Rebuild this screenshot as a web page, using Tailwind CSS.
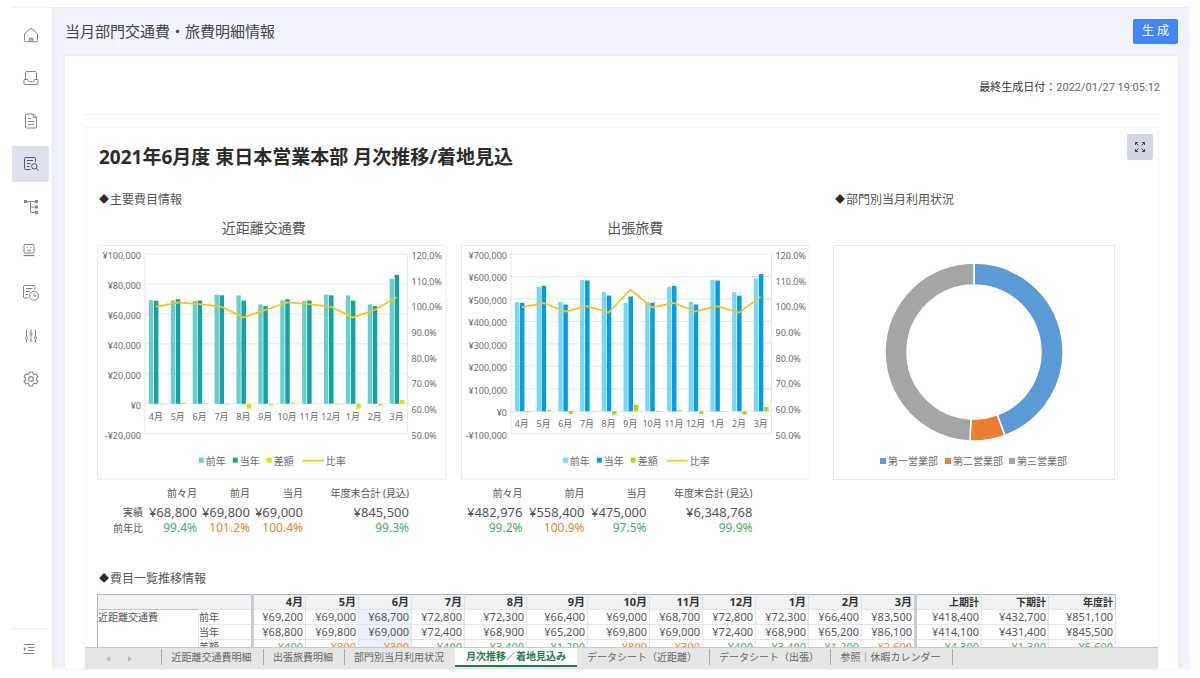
<!DOCTYPE html>
<html lang="ja">
<head>
<meta charset="utf-8">
<meta name="viewport" content="width=device-width, initial-scale=1">
<title>当月部門交通費・旅費明細情報</title>
<script src="https://cdn.jsdelivr.net/npm/@tailwindcss/browser@4"></script>
</head>
<body class="flex h-screen overflow-hidden bg-white pt-[7px] pr-[10px] pb-[9px] pl-3 font-['Noto_Sans','Noto_Sans_CJK_JP',sans-serif] text-[#555]">

<aside class="flex w-10 shrink-0 flex-col justify-between border-t border-[#efeff5] pt-[9px] pr-[3px]">
  <nav aria-label="メイン" class="flex flex-col gap-[7px] text-[#858585]">
    <a href="#home" aria-label="ホーム" class="flex h-9 items-center justify-center rounded-xs">
      <svg class="size-4" viewBox="0 0 16 16" fill="none" stroke="currentColor"><path d="M1.500 6.700 8 1.200l6.500 5.500v7a1 1 0 0 1-1 1h-11a1 1 0 0 1-1-1z"/><path d="M6.300 14.500v-3.200h3.400v3.200"/><path d="M8 11.500v3"/></svg>
    </a>
    <a href="#inbox" aria-label="受信箱" class="flex h-9 items-center justify-center rounded-xs">
      <svg class="size-4" viewBox="0 0 16 16" fill="none" stroke="currentColor"><path d="M2.500 9V2.500a1 1 0 0 1 1-1h9a1 1 0 0 1 1 1V9"/><path d="M1 9.500h3.600l1.600 2.300h3.600l1.600-2.300H15v4a1 1 0 0 1-1 1H2a1 1 0 0 1-1-1z"/></svg>
    </a>
    <a href="#document" aria-label="文書" class="flex h-9 items-center justify-center rounded-xs">
      <svg class="size-4" viewBox="0 0 16 16" fill="none" stroke="currentColor"><path d="M2.500 2a1 1 0 0 1 1-1h7l3 3.200V14a1 1 0 0 1-1 1h-9a1 1 0 0 1-1-1z"/><path d="M10.300 1v3.400h3.200M5 5.500h3M5 8.500h6M5 11.500h6"/></svg>
    </a>
    <a href="#report" aria-label="レポート" aria-current="page" class="flex h-9 items-center justify-center rounded-xs bg-[#dfe0ed] text-[#555761]">
      <svg class="size-4" viewBox="0 0 16 16" fill="none" stroke="currentColor"><path d="M12.500 6V2.500a1 1 0 0 0-1-1h-9a1 1 0 0 0-1 1v10a1 1 0 0 0 1 1h5"/><path d="M4 4.500h6M4 7.500h3.500M4 10.500h2.500"/><circle cx="11.300" cy="10.300" r="2.700"/><path d="m13.300 12.300 2.200 2.400"/></svg>
    </a>
    <a href="#tree" aria-label="組織" class="flex h-9 items-center justify-center rounded-xs">
      <svg class="size-4" viewBox="0 0 16 16" fill="none" stroke="currentColor"><path d="M2.500 2.500h11M7.500 2.500v11h6M7.500 8h6"/><g fill="currentColor" stroke="none"><rect x="1" y="1" width="3" height="3"/><rect x="12" y="1" width="3" height="3"/><rect x="12" y="6.500" width="3" height="3"/><rect x="12" y="12" width="3" height="3"/></g></svg>
    </a>
    <a href="#robot" aria-label="ボット" class="flex h-9 items-center justify-center rounded-xs pr-[3px]">
      <svg class="size-[14px]" viewBox="0 0 14 14" fill="none" stroke="currentColor"><rect x="2" y="1.500" width="10" height="8.500" rx=".5"/><path d="M4.500 4.500h1.200M8.300 4.500h1.200M5 7l1 .8h2L9 7"/><path d="M1.500 12.500h11" stroke-width="1.300"/></svg>
    </a>
    <a href="#schedule" aria-label="履歴" class="flex h-9 items-center justify-center rounded-xs">
      <svg class="size-4" viewBox="0 0 16 16" fill="none" stroke="currentColor"><path d="M12 5V1.500a1 1 0 0 0-1-1H1.500a1 1 0 0 0-1 1v10.500a1 1 0 0 0 1 1h4"/><path d="M3 3.500h6.500M3 6.500h4M3 9.500h2"/><circle cx="11" cy="10.800" r="4.500"/><path d="M11 8.300v2.700h2.300"/></svg>
    </a>
    <a href="#adjust" aria-label="調整" class="flex h-9 items-center justify-center rounded-xs">
      <svg class="size-4" viewBox="0 0 16 16" fill="none" stroke="currentColor"><path d="M3.500 1.500v7M3.500 11.500v3M8 1.500v3M8 7.500v7M12.500 1.500v7M12.500 11.500v3"/><circle cx="3.500" cy="9.800" r="1.200"/><circle cx="8" cy="6" r="1.200"/><circle cx="12.500" cy="9.800" r="1.200"/></svg>
    </a>
    <a href="#settings" aria-label="設定" class="flex h-9 items-center justify-center rounded-xs">
      <svg class="size-4" viewBox="0 0 24 24" fill="none" stroke="currentColor" stroke-width="1.600" stroke-linejoin="round"><path d="M9.600 2h4.800l.7 3.100 1.900 1.100 3-1 2.400 4.200-2.300 2.100v2.200l2.300 2.100-2.400 4.200-3-1-1.900 1.100-.7 3.100H9.600l-.7-3.100L7 19l-3 1-2.400-4.200 2.300-2.100v-2.200L1.600 9.400 4 5.200l3 1 1.900-1.100z" transform="translate(0 -.6)"/><circle cx="12" cy="12" r="3.600"/></svg>
    </a>
  </nav>
  <div class="border-t border-[#ececec] pt-3 pb-3">
    <button type="button" aria-label="メニューを開く" class="flex h-4 w-full items-center justify-center pr-[3px] text-[#858585]">
      <svg class="size-3" viewBox="0 0 12 12" fill="none" stroke="currentColor"><path d="M.5 1.500h11M5 4.500h6.500M5 7.500h6.500M.5 10.500h11"/><path d="M.8 3.800v4.400L3.300 6z" fill="currentColor" stroke="none"/></svg>
    </button>
  </div>
</aside>

<main class="flex min-w-0 flex-1 flex-col border-t border-[#e9eaf4] bg-[#f1f2fb] pr-3 pl-[13px] shadow-[inset_4px_0_3px_-2px_#e6e7f3]">
  <header class="flex h-12 shrink-0 items-center justify-between pb-[2px]">
    <h1 class="text-[15px] text-[#444]">当月部門交通費・旅費明細情報</h1>
    <button type="button" class="h-[25px] w-[45px] rounded-xs bg-[#4086f7] text-xs text-white">生 成</button>
  </header>

  <section class="flex min-h-0 flex-1 flex-col bg-white pr-[18px] pl-[19px] shadow-[0_0_3px_#e2e3ee]">
    <p class="flex h-[59px] shrink-0 items-center justify-end border-b border-[#f2f2f2] pt-[6px] font-[Roboto,'Noto_Sans_CJK_JP',sans-serif] text-[11px] text-[#666]"><span class="text-[#333]">最終生成日付：</span><time datetime="2022-01-27T19:05:12">2022/01/27 19:05:12</time></p>

    <div class="mt-3 mr-px flex min-h-0 flex-1 flex-col border border-b-0 border-[#f4f4f4]">
      <div class="min-h-0 flex-1 overflow-hidden">
        <div class="flex h-[59px] justify-between pt-[6px] pr-[5px] pl-[14px]">
          <h2 class="flex h-[46px] items-center text-[19px] font-bold text-[#2b2b2b]">2021年6月度 東日本営業本部 月次推移/着地見込</h2>
          <button type="button" aria-label="全画面表示" class="flex size-[26px] items-center justify-center rounded-xs bg-[#d3d5e3] text-[#444]">
            <svg class="size-3" viewBox="0 0 12 12" fill="none" stroke="currentColor"><path d="M1.500 4V1.500H4M8 1.500h2.500V4M10.500 8v2.500H8M4 10.500H1.500V8M1.500 1.500 4.500 4.500M10.500 1.500l-3 3M10.500 10.500l-3-3M1.500 10.500l3-3"/></svg>
          </button>
        </div>

        <div class="flex gap-[23px] pr-[43px] pl-3">
          <section class="flex-[713]">
            <h3 class="flex h-[26px] items-center pl-[2px] text-xs"><span class="w-[11px] text-[10px] text-[#2b2b2b]">◆</span>主要費目情報</h3>
            <div class="grid grid-cols-2 gap-[14px]">
              <div>
                <h4 class="flex h-8 items-center justify-center pr-4 pb-[3px] text-sm">近距離交通費</h4>
                <svg id="chart-local" class="block w-full font-['Noto_Sans','Noto_Sans_CJK_JP',sans-serif]" viewBox="0 0 350 235" role="img" aria-label="近距離交通費のグラフ"></svg>
                <table class="mt-1 w-[312px] table-fixed text-right">
                  <colgroup><col class="w-[46px]"><col class="w-[54px]"><col class="w-[53px]"><col class="w-[53px]"><col class="w-[106px]"></colgroup>
                  <thead><tr class="h-[18px] text-[10px] leading-4"><td></td><th scope="col" class="font-normal">前々月</th><th scope="col" class="font-normal">前月</th><th scope="col" class="font-normal">当月</th><th scope="col" class="font-normal whitespace-nowrap">年度末合計 (見込)</th></tr></thead>
                  <tbody>
                    <tr class="h-5 text-[13px] leading-5"><th scope="row" class="text-[10px] font-normal">実績</th><td>¥68,800</td><td>¥69,800</td><td>¥69,000</td><td>¥845,500</td></tr>
                    <tr class="h-3 text-xs leading-3 text-[#3fb15f]"><th scope="row" class="text-[10px] font-normal text-[#555]">前年比</th><td>99.4%</td><td class="text-[#ec8426]">101.2%</td><td class="text-[#ec8426]">100.4%</td><td>99.3%</td></tr>
                  </tbody>
                </table>
              </div>
              <div>
                <h4 class="flex h-8 items-center justify-center pb-[3px] text-sm">出張旅費</h4>
                <svg id="chart-trip" class="block w-full font-['Noto_Sans','Noto_Sans_CJK_JP',sans-serif]" viewBox="0 0 350 235" role="img" aria-label="出張旅費のグラフ"></svg>
                <table class="mt-1 w-[292px] table-fixed text-right">
                  <colgroup><col class="w-[62px]"><col class="w-[62px]"><col class="w-[62px]"><col class="w-[106px]"></colgroup>
                  <thead><tr class="h-[18px] text-[10px] leading-4"><th scope="col" class="font-normal">前々月</th><th scope="col" class="font-normal">前月</th><th scope="col" class="font-normal">当月</th><th scope="col" class="font-normal whitespace-nowrap">年度末合計 (見込)</th></tr></thead>
                  <tbody>
                    <tr class="h-5 text-[13px] leading-5"><td>¥482,976</td><td>¥558,400</td><td>¥475,000</td><td>¥6,348,768</td></tr>
                    <tr class="h-3 text-xs leading-3 text-[#3fb15f]"><td>99.2%</td><td class="text-[#ec8426]">100.9%</td><td>97.5%</td><td>99.9%</td></tr>
                  </tbody>
                </table>
              </div>
            </div>
          </section>
          <section class="flex-[282]">
            <h3 class="flex h-[26px] items-center pl-[2px] text-xs"><span class="w-[11px] text-[10px] text-[#2b2b2b]">◆</span>部門別当月利用状況</h3>
            <svg id="chart-dept" class="mt-8 block w-full font-['Noto_Sans','Noto_Sans_CJK_JP',sans-serif]" viewBox="0 0 282 235" role="img" aria-label="部門別当月利用状況のグラフ"></svg>
          </section>
        </div>

        <section class="mt-[30px] pr-[43px] pl-3">
          <h3 class="flex h-[30px] items-center pl-[2px] text-xs"><span class="w-[11px] text-[10px] text-[#2b2b2b]">◆</span>費目一覧推移情報</h3>
          <table id="items" class="w-full table-fixed border-collapse border border-[#b5b8bc] text-[11px] leading-[14px]">
            <colgroup>
              <col class="w-[101px]"><col class="w-[54px]"><col class="w-[53px]"><col class="w-[53px]"><col class="w-[53px]"><col class="w-[53px]"><col class="w-[62px]"><col class="w-[61px]"><col class="w-[62px]"><col class="w-[53px]"><col class="w-[53px]"><col class="w-[53px]"><col class="w-[53px]"><col class="w-[54px]"><col class="w-[66px]"><col class="w-[67px]"><col class="w-[67px]">
            </colgroup>
          </table>
        </section>
      </div>

      <div class="flex h-[22px] shrink-0 items-stretch border-t border-[#c9c9c9] bg-[#e6e6e6] text-[10px] text-[#666]">
        <div class="flex w-[76px] items-center justify-center gap-[18px] pr-2 text-[#bbb]">
          <button type="button" aria-label="前のシート"><svg class="h-[6px] w-1" viewBox="0 0 4 6" fill="currentColor"><path d="M4 0v6L0 3z"/></svg></button>
          <button type="button" aria-label="次のシート"><svg class="h-[6px] w-1" viewBox="0 0 4 6" fill="currentColor"><path d="M0 0v6l4-3z"/></svg></button>
        </div>
        <div role="tablist" aria-label="シート" class="flex items-stretch whitespace-nowrap">
          <button type="button" role="tab" aria-selected="false" class="flex w-[102px] items-center justify-center pb-[3px]"><span class="flex h-4 w-full items-center justify-center border-l border-[#aaa] pr-[2px]">近距離交通費明細</span></button>
          <button type="button" role="tab" aria-selected="false" class="flex w-[81px] items-center justify-center pb-[3px]"><span class="flex h-4 w-full items-center justify-center border-l border-[#aaa] pr-[2px]">出張旅費明細</span></button>
          <button type="button" role="tab" aria-selected="false" class="flex w-[111px] items-center justify-center pb-[3px]"><span class="flex h-4 w-full items-center justify-center border-l border-[#aaa] pr-[2px]">部門別当月利用状況</span></button>
          <button type="button" role="tab" aria-selected="true" class="mb-[2px] flex w-[122px] items-center justify-center border-b-2 border-[#217c4a] bg-white font-bold text-[#217c4a]">月次推移／着地見込み</button>
          <button type="button" role="tab" aria-selected="false" class="flex w-[132px] items-center justify-center pb-[3px]"><span class="flex h-4 w-full items-center justify-center pr-[2px]">データシート（近距離）</span></button>
          <button type="button" role="tab" aria-selected="false" class="flex w-[121px] items-center justify-center pb-[3px]"><span class="flex h-4 w-full items-center justify-center border-l border-[#aaa] pr-[2px]">データシート（出張）</span></button>
          <button type="button" role="tab" aria-selected="false" class="flex w-[123px] items-center justify-center pb-[3px]"><span class="flex h-4 w-full items-center justify-center border-x border-[#aaa] pr-[2px]">参照｜休暇カレンダー</span></button>
        </div>
      </div>
    </div>
  </section>
</main>

<script>
const months = ['4月', '5月', '6月', '7月', '8月', '9月', '10月', '11月', '12月', '1月', '2月', '3月'];
const local = {
  prev: [69200, 69000, 68700, 72800, 72300, 66400, 69000, 68700, 72800, 72300, 66400, 83500],
  cur: [68800, 69800, 69000, 72400, 68900, 65200, 69800, 69000, 72400, 68900, 65200, 86100]
};
const trip = {
  prev: [487000, 553400, 487000, 584000, 530000, 481600, 487000, 553400, 487000, 584000, 530000, 591000],
  cur: [482976, 558400, 475000, 582000, 515000, 511000, 482976, 558400, 475000, 582000, 515000, 610500]
};
const yen = n => (n < 0 ? '-' : '') + '¥' + Math.abs(n).toLocaleString('en-US');
const label = (x, y, text, anchor, size = 9) =>
  `<text x="${x}" y="${y}" font-size="${size}" fill="#6b6b6b" text-anchor="${anchor}">${text}</text>`;

// Bars on the yen axis, ratio line on the percent axis.
function comboChart(id, data, o) {
  const top = 9, bottom = 189, h = bottom - top;
  const y = v => bottom - (v - o.min) / (o.max - o.min) * h;
  const yPct = p => bottom - (p - 50) / 70 * h;
  const step = (o.right - o.left) / 12;
  let s = '<rect x="0.5" y="0.5" width="349" height="234" fill="#fff" stroke="#eaeaea"/>';
  for (let v = o.min; v <= o.max; v += o.tick) {
    s += `<path d="M${o.left} ${y(v)}H${o.right}" stroke="#e6e6e6"/>` + label(o.left - 4, y(v) + 5, yen(v), 'end');
  }
  s += `<path d="M${o.left} ${top}V${bottom}M${o.right} ${top}V${bottom}" stroke="#e6e6e6"/>`;
  for (let p = 50; p <= 120; p += 10) s += label(o.right + 4, yPct(p) + 5, p.toFixed(1) + '%', 'start');
  const bar = (x, v, w, c) => `<rect x="${x}" y="${Math.min(y(v), y(0))}" width="${w}" height="${Math.abs(y(v) - y(0))}" fill="${c}"/>`;
  const points = [];
  months.forEach((m, i) => {
    const x = o.left + i * step;
    s += bar(x + 4, data.prev[i], 4.3, o.colors[0]) + bar(x + 9, data.cur[i], 4.5, o.colors[1])
       + bar(x + 14.3, data.cur[i] - data.prev[i], 4.5, o.colors[2]);
    s += label(x + step / 2, y(0) + 16, m, 'middle');
    points.push(`${x + step / 2},${yPct(data.cur[i] / data.prev[i] * 100)}`);
  });
  s += `<polyline points="${points.join(' ')}" fill="none" stroke="#fbc31c" stroke-width="1.8"/>`;
  ['前年', '当年', '差額'].forEach((t, i) => {
    const x = o.legend + i * 34;
    s += `<rect x="${x}" y="213" width="5" height="5" fill="${o.colors[i]}"/>` + label(x + 7, 220, t, 'start', 10);
  });
  s += `<path d="M${o.legend + 104} 216h21" stroke="#fbc31c" stroke-width="1.8"/>` + label(o.legend + 127, 220, '比率', 'start', 10);
  document.getElementById(id).innerHTML = s;
}
comboChart('chart-local', local, { left: 48, right: 311, min: -20000, max: 100000, tick: 20000, legend: 102, colors: ['#6acdc9', '#14a3a2', '#dbe20a'] });
comboChart('chart-trip', trip, { left: 50, right: 311, min: -100000, max: 700000, tick: 100000, legend: 102, colors: ['#76d6fe', '#059ce0', '#a2df0c'] });

// Department share ring.
(() => {
  const cx = 141, cy = 107, r1 = 89, r0 = 67;
  const pt = (r, a) => `${cx + r * Math.sin(a * Math.PI / 180)} ${cy - r * Math.cos(a * Math.PI / 180)}`;
  const parts = [['第一営業部', 0, 159.7, '#5b9bd5', 47], ['第二営業部', 159.7, 182.6, '#ed7d31', 112], ['第三営業部', 182.6, 360, '#a5a5a5', 176]];
  let s = '<rect x="0.5" y="0.5" width="281" height="234" fill="#fff" stroke="#e6e6e6"/>';
  for (const [name, a, b, c, x] of parts) {
    const big = b - a > 180 ? 1 : 0;
    s += `<path d="M${pt(r1, a)}A${r1} ${r1} 0 ${big} 1 ${pt(r1, b)}L${pt(r0, b)}A${r0} ${r0} 0 ${big} 0 ${pt(r0, a)}Z" fill="${c}" stroke="#fff" stroke-width="1.5"/>`;
    s += `<rect x="${x}" y="213" width="6" height="6" fill="${c}"/>` + label(x + 8, 220, name, 'start', 10);
  }
  document.getElementById('chart-dept').innerHTML = s;
})();

// Item table.
(() => {
  const sum = (a, i, j) => a.slice(i, j).reduce((x, y) => x + y, 0);
  const full = a => [...a, sum(a, 0, 6), sum(a, 6, 12), sum(a, 0, 12)];
  const edge = i => i === 0 || i === 12 ? ' border-l-[3px] border-l-[#c9ccd1]' : '';
  let s = '<thead><tr class="border-b border-[#c3c6ca] bg-[#f0f1f3] text-[#333]"><th colspan="2"></th>';
  [...months, '上期計', '下期計', '年度計'].forEach((m, i) => {
    s += `<th scope="col" class="border-l border-[#dfe1e4] pr-[2px] text-right ${i > 11 ? 'text-[10px]' : ''}${edge(i)}">${m}</th>`;
  });
  s += '</tr></thead><tbody>';
  const prev = full(local.prev), cur = full(local.cur);
  [['前年', prev], ['当年', cur], ['差額', cur.map((v, i) => v - prev[i])]].forEach(([name, vals], r) => {
    s += '<tr>' + (r ? '' : '<th scope="rowgroup" rowspan="3" class="text-left align-top text-[10px] font-normal">近距離交通費</th>');
    s += `<th scope="row" class="border border-[#e2e5ea] text-left text-[10px] font-normal">${name}</th>`;
    vals.forEach((v, i) => {
      const color = r < 2 ? '' : v < 0 ? ' text-[#3fb15f]' : ' text-[#ec8426]';
      s += `<td class="border border-[#e2e5ea] pr-[2px] text-right${i === 2 ? ' bg-[#ebf0fc]' : ''}${color}${edge(i)}">${yen(Math.abs(v))}</td>`;
    });
    s += '</tr>';
  });
  document.getElementById('items').insertAdjacentHTML('beforeend', s + '</tbody>');
})();
</script>
</body>
</html>
